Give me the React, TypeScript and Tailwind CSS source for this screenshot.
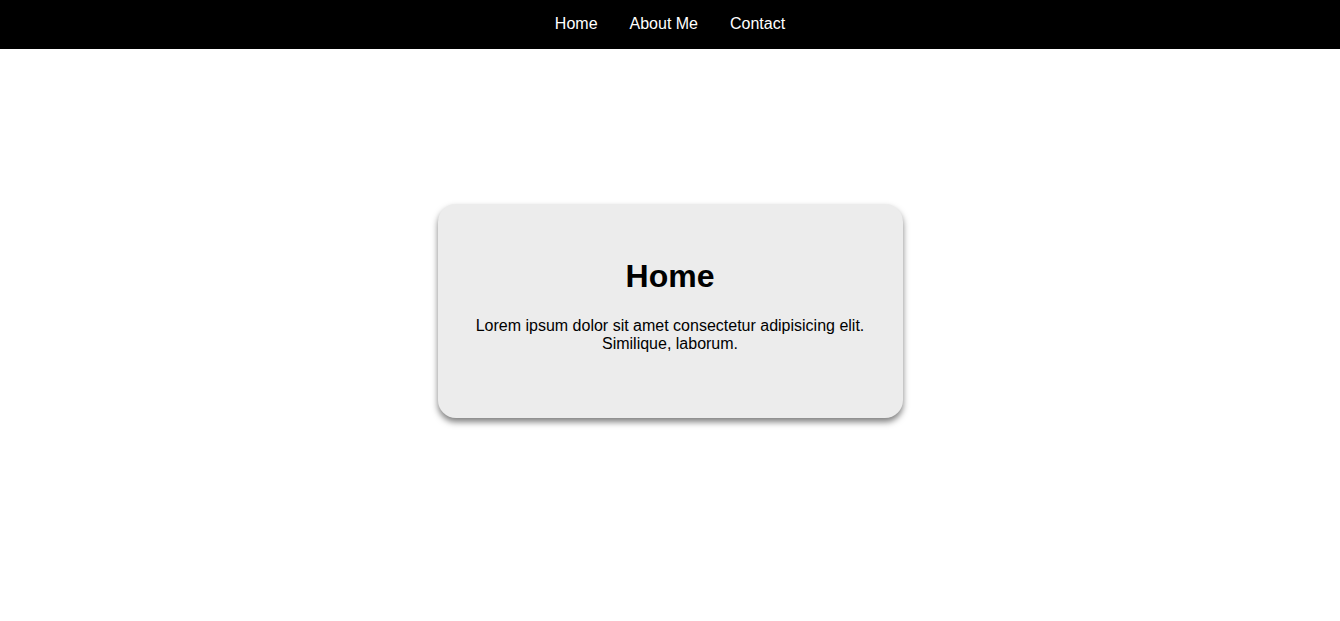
export default function App() {
  return (
    <div className="flex h-screen flex-col bg-white" style={{ fontFamily: '"Liberation Sans", Arial, sans-serif' }}>
      <nav className="flex h-[49px] shrink-0 items-center justify-center gap-8 bg-black text-base leading-[18.4px] text-white">
        <a href="#">Home</a>
        <a href="#">About Me</a>
        <a href="#">Contact</a>
      </nav>
      <main className="flex flex-1 items-center justify-center pb-[49px]">
        <div className="flex h-[214px] w-[465px] flex-col items-center rounded-[18px] bg-[#ececec] pt-[54px] text-center text-black shadow-[0_4px_6px_rgba(0,0,0,0.5)]">
          <h1 className="text-[32px] font-bold leading-[37px]">Home</h1>
          <p className="mt-[22px] px-8 text-base leading-[18.4px]">
            Lorem ipsum dolor sit amet consectetur adipisicing elit. Similique, laborum.
          </p>
        </div>
      </main>
    </div>
  );
}
